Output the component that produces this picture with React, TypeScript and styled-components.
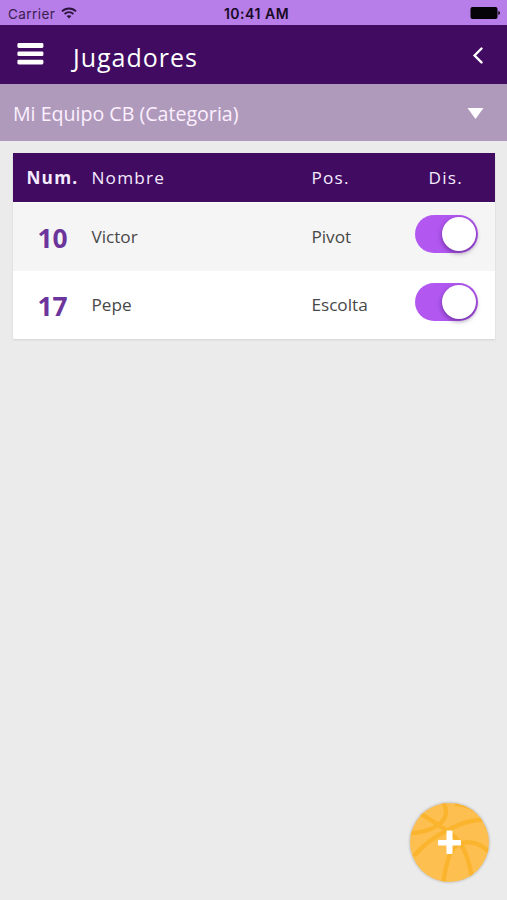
import React, { useState } from 'react';
import styled, { createGlobalStyle } from 'styled-components';

const GlobalStyle = createGlobalStyle`
  *, *::before, *::after { box-sizing: border-box; }
  body { margin: 0; background: #ebebeb; font-family: "Open Sans", "Noto Sans", sans-serif; }
  svg { display: block; }
`;

const BaseButton = styled.button`
  margin: 0;
  padding: 0;
  border: 0;
  background: none;
  color: inherit;
  font: inherit;
  cursor: pointer;
`;

const Screen = styled.div`
  min-height: 100vh;
  display: flex;
  flex-direction: column;
  background: #ebebeb;
`;

const StatusBar = styled.div`
  height: 25px;
  padding: 2px 7px 0 8px;
  display: grid;
  grid-template-columns: 1fr auto 1fr;
  align-items: center;
  background: #b77de8;
  color: #170a24;
  font-family: Inter, Roboto, sans-serif;
  font-size: 13.5px;
  line-height: 20px;
`;

const Carrier = styled.div`
  display: flex;
  align-items: center;
  gap: 6px;
  color: #3a2050;
  letter-spacing: 0.45px;
`;

const WifiMark = styled.span`
  margin-bottom: 2px;
`;

const Clock = styled.div`
  padding-left: 5px;
  font-size: 14px;
  font-weight: 600;
  letter-spacing: 0.52px;
`;

const Battery = styled.div`
  justify-self: end;
  margin-bottom: 1px;
`;

const Header = styled.header`
  height: 59px;
  padding: 0 23px 0 17px;
  display: flex;
  align-items: center;
  background: #400b61;
  color: #fff;
`;

const MenuButton = styled(BaseButton)`
  width: 27px;
  height: 24px;
  margin-bottom: 1px;
`;

const Title = styled.h1`
  flex: 1;
  margin: 4px 0 0 29px;
  font-size: 25px;
  font-weight: 400;
  line-height: 34px;
  letter-spacing: 1px;
`;

const BackButton = styled(BaseButton)`
  width: 12px;
  height: 18px;
`;

const TeamSelect = styled(BaseButton)`
  height: 57px;
  padding: 2px 23px 0 13px;
  display: flex;
  align-items: center;
  justify-content: space-between;
  background: #af9abb;
  color: #fcf0ff;
  font-size: 19.6px;
`;

const Table = styled.div`
  margin: 12px 12px 0 13px;
  background: #fff;
  box-shadow: 0 1px 2px rgba(0, 0, 0, 0.1);
`;

const Row = styled.div<{ $striped?: boolean }>`
  height: 68px;
  display: grid;
  grid-template-columns: 78.4px 220px 103.6px 1fr;
  align-items: center;
  background: ${(p) => (p.$striped ? '#f5f5f5' : '#fff')};
  color: #484848;
  font-size: 17.2px;
`;

const HeadRow = styled(Row)`
  height: 49px;
  margin-bottom: 1px;
  background: #400b61;
  color: #f5eaff;
  letter-spacing: 1.25px;
`;

const HeadCell = styled.div<{ $bold?: boolean; $indent?: number }>`
  padding-left: ${(p) => p.$indent ?? 0}px;
  font-weight: ${(p) => (p.$bold ? 700 : 400)};
`;

const Cell = styled.div`
  padding-bottom: 2px;
`;

const PlayerNumber = styled.div`
  padding: 1px 0 0 24.4px;
  color: #6c359b;
  font-size: 26.4px;
  font-weight: 700;
`;

const Switch = styled(BaseButton)<{ $on: boolean }>`
  width: 63px;
  height: 38px;
  margin-bottom: 6px;
  padding: 0 2px;
  display: flex;
  align-items: center;
  justify-content: ${(p) => (p.$on ? 'flex-end' : 'flex-start')};
  border-radius: 19px;
  background: ${(p) => (p.$on ? '#b258f1' : '#ccc')};
`;

const Knob = styled.span`
  width: 34px;
  height: 34px;
  border-radius: 50%;
  background: #fff;
  box-shadow: 0 2px 5px rgba(40, 0, 70, 0.5);
`;

const AddButton = styled(BaseButton)`
  position: fixed;
  right: 17px;
  bottom: 17px;
  width: 81px;
  height: 81px;
  border-radius: 50%;
  filter: drop-shadow(0 0 1.5px rgba(0, 0, 0, 0.28));
`;

const WifiIcon = () => (
  <svg width="16" height="12" viewBox="0 0 16 12" fill="none" stroke="#2b153d" strokeWidth="1.8">
    <path d="M1 4.4C4.9.5 11.1.5 15 4.4" />
    <path d="M3.6 7c2.5-2.4 6.3-2.4 8.8 0" />
    <path d="M8 11.5 5.6 9.1c1.4-1.3 3.4-1.3 4.8 0z" fill="#2b153d" stroke="none" />
  </svg>
);

const BatteryIcon = () => (
  <svg width="30" height="12" viewBox="0 0 30 12" fill="#050208">
    <rect x="0.5" y="0" width="27" height="12" rx="2" />
    <path d="M28.3 4q1.7 .4 1.7 2t-1.7 2z" />
  </svg>
);

const MenuIcon = () => (
  <svg width="27" height="24" viewBox="0 0 27 24" fill="#fff">
    <rect x=".4" y="1" width="26" height="4.9" rx="1.4" />
    <rect x=".4" y="9.4" width="26" height="4.7" rx="1.4" />
    <rect x=".4" y="17.7" width="26" height="4.7" rx="1.4" />
  </svg>
);

const BackIcon = () => (
  <svg width="12" height="18" viewBox="0 0 12 18" fill="none" stroke="#fff" strokeWidth="2.4" strokeLinecap="round">
    <path d="M9.5 2.5 2.6 9.5l6.9 6.9" />
  </svg>
);

const CaretIcon = () => (
  <svg width="17" height="12" viewBox="0 0 17 12" fill="#fff">
    <path d="M.5 0h16l-8 11z" />
  </svg>
);

const BallIcon = () => (
  <svg width="81" height="81" viewBox="0 0 81 81">
    <defs>
      <clipPath id="ball">
        <circle cx="40.5" cy="40.5" r="39.5" />
      </clipPath>
    </defs>
    <g clipPath="url(#ball)">
      <rect width="81" height="81" fill="#fdc050" />
      <g fill="none" stroke="#fbb42e" strokeWidth="4.5">
        <path d="M12 12C25 20 35 26 46 35C56 45 61 61 63 78" />
        <path d="M1 31C15 31 32 25 36 15C38 10 37 5 34 0" />
        <path d="M5 54C14 43 26 34 41 27C52 21 61 18 73 18" />
        <path d="M34 84C36 64 40 47 50 42C61 37 74 43 81 51" />
        <path d="M46 2C55 2 65 5 74 14" />
      </g>
    </g>
    <path d="M37.5 29.500q0-1 1-1h4q1 0 1 1v8.500h7.500q1 0 1 1v3.500q0 1-1 1h-7.500v7.500q0 1-1 1h-4q-1 0-1-1v-7.500h-7.500q-1 0-1-1v-3.500q0-1 1-1h7.500z" fill="#fff" />
  </svg>
);

const roster = [
  { number: 10, name: 'Victor', position: 'Pivot' },
  { number: 17, name: 'Pepe', position: 'Escolta' },
];

export default function App() {
  const [available, setAvailable] = useState<Record<number, boolean>>({ 10: true, 17: true });

  return (
    <Screen>
      <GlobalStyle />
      <StatusBar>
        <Carrier>Carrier <WifiMark><WifiIcon /></WifiMark></Carrier>
        <Clock>10:41 AM</Clock>
        <Battery><BatteryIcon /></Battery>
      </StatusBar>
      <Header>
        <MenuButton aria-label="Menu"><MenuIcon /></MenuButton>
        <Title>Jugadores</Title>
        <BackButton aria-label="Volver"><BackIcon /></BackButton>
      </Header>
      <TeamSelect>
        <span>Mi Equipo CB (Categoria)</span>
        <CaretIcon />
      </TeamSelect>
      <Table>
        <HeadRow>
          <HeadCell $bold $indent={13.4}>Num.</HeadCell>
          <HeadCell>Nombre</HeadCell>
          <HeadCell>Pos.</HeadCell>
          <HeadCell $indent={13.5}>Dis.</HeadCell>
        </HeadRow>
        {roster.map((player, i) => (
          <Row key={player.number} $striped={i % 2 === 0}>
            <PlayerNumber>{player.number}</PlayerNumber>
            <Cell>{player.name}</Cell>
            <Cell>{player.position}</Cell>
            <Switch
              role="switch"
              aria-checked={available[player.number]}
              aria-label={player.name}
              $on={available[player.number]}
              onClick={() => setAvailable((v) => ({ ...v, [player.number]: !v[player.number] }))}
            >
              <Knob />
            </Switch>
          </Row>
        ))}
      </Table>
      <AddButton aria-label="Nuevo jugador"><BallIcon /></AddButton>
    </Screen>
  );
}
